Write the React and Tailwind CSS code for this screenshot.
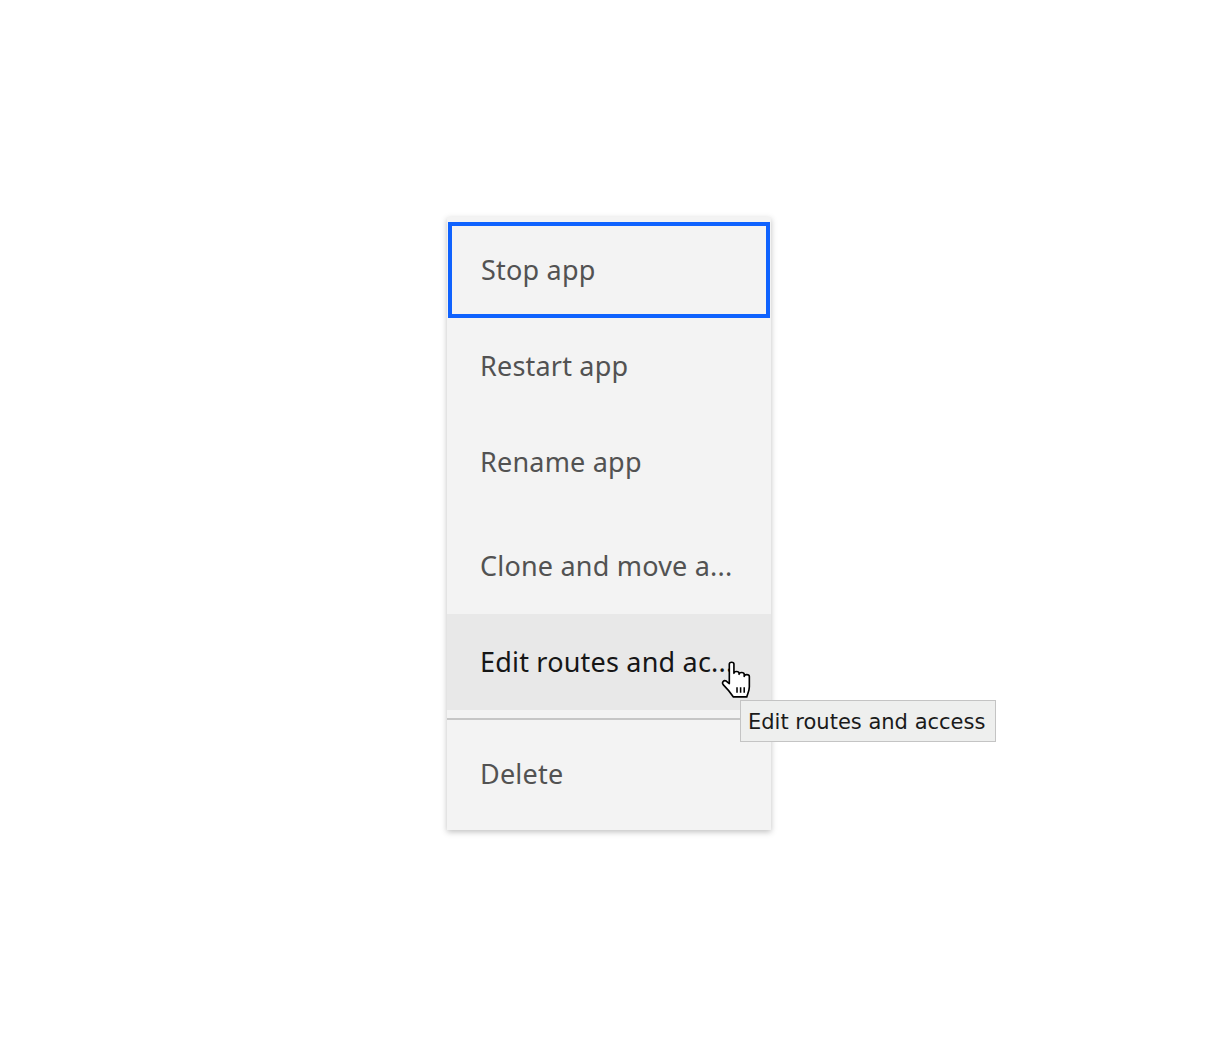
import React from "react";

const font = { fontFamily: '"Noto Sans", "Open Sans", sans-serif' };

function Item({ children, className = "", textClass = "text-[#525252]" }) {
  return (
    <div className={`flex items-center pl-[33px] pr-[16px] ${className}`}>
      <span className={`block whitespace-nowrap overflow-hidden text-[27px] tracking-[0.2px] ${textClass}`}>{children}</span>
    </div>
  );
}

function Hand() {
  return (
    <svg width="31" height="38" viewBox="0 0 30 37" className="block">
      <path
        d="M8 3 C8 0.6 12.5 0.6 12.5 3 L12.5 12 C12.5 9.6 17.5 9.6 17.5 12 L17.5 13 C17.5 10.6 22.5 10.6 22.5 13 L22.5 15 C22.5 12.6 27.5 12.6 27.5 15 L27.5 25 C27.5 29 26 31 25 35 L12 35 C10 32 6 27 2 23 C0.5 21 2.5 18 5 19.5 L8 22 Z"
        fill="#fff"
        stroke="#000"
        strokeWidth="1.6"
        strokeLinejoin="round"
      />
      <path d="M15.5 25.5 V31 M19 25.5 V31 M22.5 25.5 V31" stroke="#000" strokeWidth="1.5" />
    </svg>
  );
}

export default function App() {
  return (
    <div className="min-h-[1044px] w-full bg-white" style={font}>
      <div className="pt-[217px] pl-[447px]">
        <div className="relative w-[324px] bg-[#f3f3f3] shadow-[0_2px_6px_rgba(0,0,0,0.25)] pt-[5px] pb-[2px]">
          <div className="mx-[1px] h-[96px] border-[4px] border-[#0f62fe] flex items-center pl-[29px]">
            <span className="text-[27px] tracking-[0.2px] text-[#525252] whitespace-nowrap">Stop app</span>
          </div>
          <Item className="h-[96px]">Restart app</Item>
          <Item className="h-[96px]">Rename app</Item>
          <div className="h-[8px]" />
          <Item className="h-[96px]">Clone and move a...</Item>
          <Item className="h-[96px] bg-[#e8e8e8]" textClass="text-[#161616]">Edit routes and ac...</Item>
          <div className="h-[8px]" />
          <div className="h-[2px] bg-[#c6c6c6]" />
          <Item className="h-[108px]">Delete</Item>

          <div className="absolute left-[274px] top-[444px]">
            <Hand />
          </div>
          <div className="absolute left-[293px] top-[483px] h-[42px] flex items-center pl-[7px] pr-[10px] pt-[4px] bg-[#eeefee] border border-[#c4c4c4] whitespace-nowrap">
            <span className="text-[21px] text-[#1a1a1a]" style={{ fontFamily: '"DejaVu Sans", sans-serif' }}>Edit routes and access</span>
          </div>
        </div>
      </div>
    </div>
  );
}
